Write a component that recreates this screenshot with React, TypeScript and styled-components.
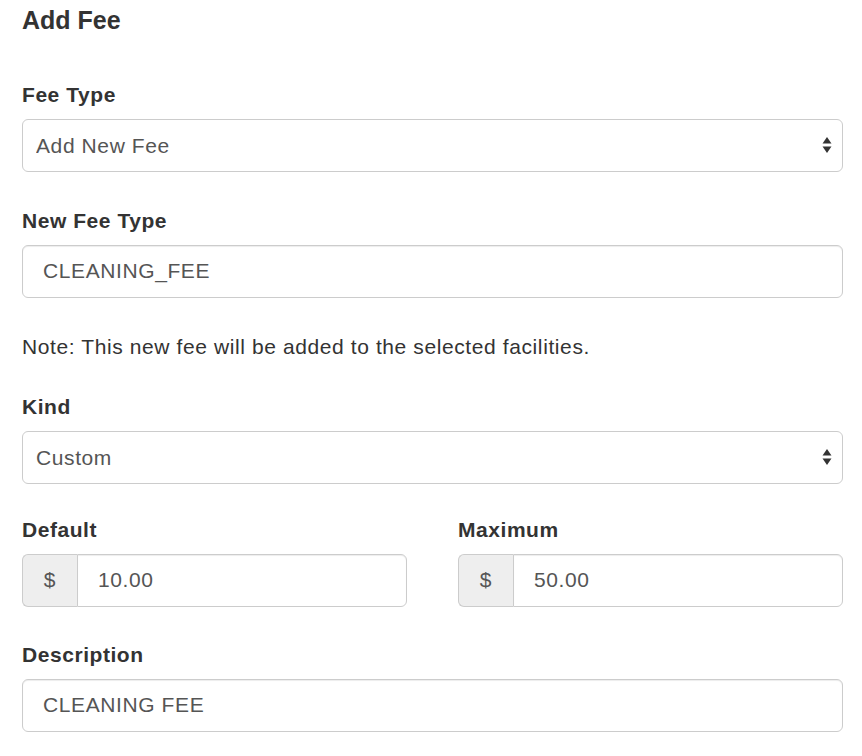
import React, { useState } from 'react';
import styled, { createGlobalStyle } from 'styled-components';

const GlobalStyle = createGlobalStyle`
  html, body {
    margin: 0;
    padding: 0;
    background: #ffffff;
  }
  body {
    font-family: "Liberation Sans", Arial, sans-serif;
    color: #333333;
  }
  * {
    box-sizing: border-box;
  }
`;

const Page = styled.form`
  width: 862px;
  padding: 7px 19px 0 22px;
`;

const Title = styled.h4`
  margin: 0 0 46px 0;
  font-size: 25px;
  line-height: 27.5px;
  font-weight: 700;
  color: #333;
`;

const Group = styled.div<{ $gap?: number }>`
  margin-bottom: ${(p) => p.$gap ?? 35}px;
`;

const Label = styled.label`
  display: block;
  margin-bottom: 10px;
  font-size: 21px;
  line-height: 28px;
  letter-spacing: 0.55px;
  font-weight: 700;
  color: #333;
`;

const Note = styled.p`
  margin: 0 0 32px 0;
  font-size: 21px;
  line-height: 28px;
  letter-spacing: 0.6px;
  color: #333;
`;

const fieldBase = `
  height: 53px;
  border: 1px solid #cccccc;
  font-family: "Liberation Sans", Arial, sans-serif;
  font-size: 21px;
  letter-spacing: 0.6px;
  color: #555555;
  background: #ffffff;
`;

const TextInput = styled.input`
  ${fieldBase}
  display: block;
  width: 100%;
  padding: 0 20px;
  border-radius: 6px;
  box-shadow: inset 0 1px 1px rgba(0, 0, 0, 0.075);
  outline: none;

  &:focus {
    border-color: #66afe9;
  }
`;

const SelectWrap = styled.div`
  position: relative;
`;

const Select = styled.select`
  ${fieldBase}
  display: block;
  width: 100%;
  padding: 0 40px 0 13px;
  border-radius: 6px;
  appearance: none;
  -webkit-appearance: none;
  outline: none;
`;

const Arrows = styled.svg`
  position: absolute;
  right: 11px;
  top: 50%;
  transform: translateY(-50%);
  pointer-events: none;
`;

const Columns = styled.div`
  display: grid;
  grid-template-columns: 1fr 1fr;
  column-gap: 51px;
`;

const InputGroup = styled.div`
  display: flex;
  height: 53px;
`;

const Addon = styled.span`
  ${fieldBase}
  display: flex;
  align-items: center;
  justify-content: center;
  width: 55px;
  flex: 0 0 55px;
  background: #eeeeee;
  border-right: none;
  border-radius: 6px 0 0 6px;
`;

const GroupInput = styled(TextInput)`
  flex: 1;
  min-width: 0;
  border-radius: 0 6px 6px 0;
`;

const SelectArrows = () => (
  <Arrows width="10" height="16" viewBox="0 0 10 16">
    <path d="M5 0 L9.5 6.5 L0.5 6.5 Z" fill="#333" />
    <path d="M5 16 L9.5 9.5 L0.5 9.5 Z" fill="#333" />
  </Arrows>
);

const App: React.FC = () => {
  const [feeType, setFeeType] = useState('new');
  const [newFeeType, setNewFeeType] = useState('CLEANING_FEE');
  const [kind, setKind] = useState('custom');
  const [defaultAmount, setDefaultAmount] = useState('10.00');
  const [maximum, setMaximum] = useState('50.00');
  const [description, setDescription] = useState('CLEANING FEE');

  return (
    <>
      <GlobalStyle />
      <Page onSubmit={(e) => e.preventDefault()}>
        <Title>Add Fee</Title>

        <Group>
          <Label htmlFor="fee-type">Fee Type</Label>
          <SelectWrap>
            <Select id="fee-type" value={feeType} onChange={(e) => setFeeType(e.target.value)}>
              <option value="new">Add New Fee</option>
              <option value="cleaning">CLEANING_FEE</option>
            </Select>
            <SelectArrows />
          </SelectWrap>
        </Group>

        <Group>
          <Label htmlFor="new-fee-type">New Fee Type</Label>
          <TextInput
            id="new-fee-type"
            type="text"
            value={newFeeType}
            onChange={(e) => setNewFeeType(e.target.value)}
          />
        </Group>

        <Note>Note: This new fee will be added to the selected facilities.</Note>

        <Group $gap={32}>
          <Label htmlFor="kind">Kind</Label>
          <SelectWrap>
            <Select id="kind" value={kind} onChange={(e) => setKind(e.target.value)}>
              <option value="custom">Custom</option>
              <option value="percent">Percent</option>
            </Select>
            <SelectArrows />
          </SelectWrap>
        </Group>

        <Columns>
          <Group $gap={34}>
            <Label htmlFor="default">Default</Label>
            <InputGroup>
              <Addon>$</Addon>
              <GroupInput
                id="default"
                type="text"
                value={defaultAmount}
                onChange={(e) => setDefaultAmount(e.target.value)}
              />
            </InputGroup>
          </Group>
          <Group $gap={34}>
            <Label htmlFor="maximum">Maximum</Label>
            <InputGroup>
              <Addon>$</Addon>
              <GroupInput
                id="maximum"
                type="text"
                value={maximum}
                onChange={(e) => setMaximum(e.target.value)}
              />
            </InputGroup>
          </Group>
        </Columns>

        <Group>
          <Label htmlFor="description">Description</Label>
          <TextInput
            id="description"
            type="text"
            value={description}
            onChange={(e) => setDescription(e.target.value)}
          />
        </Group>
      </Page>
    </>
  );
};

export default App;
